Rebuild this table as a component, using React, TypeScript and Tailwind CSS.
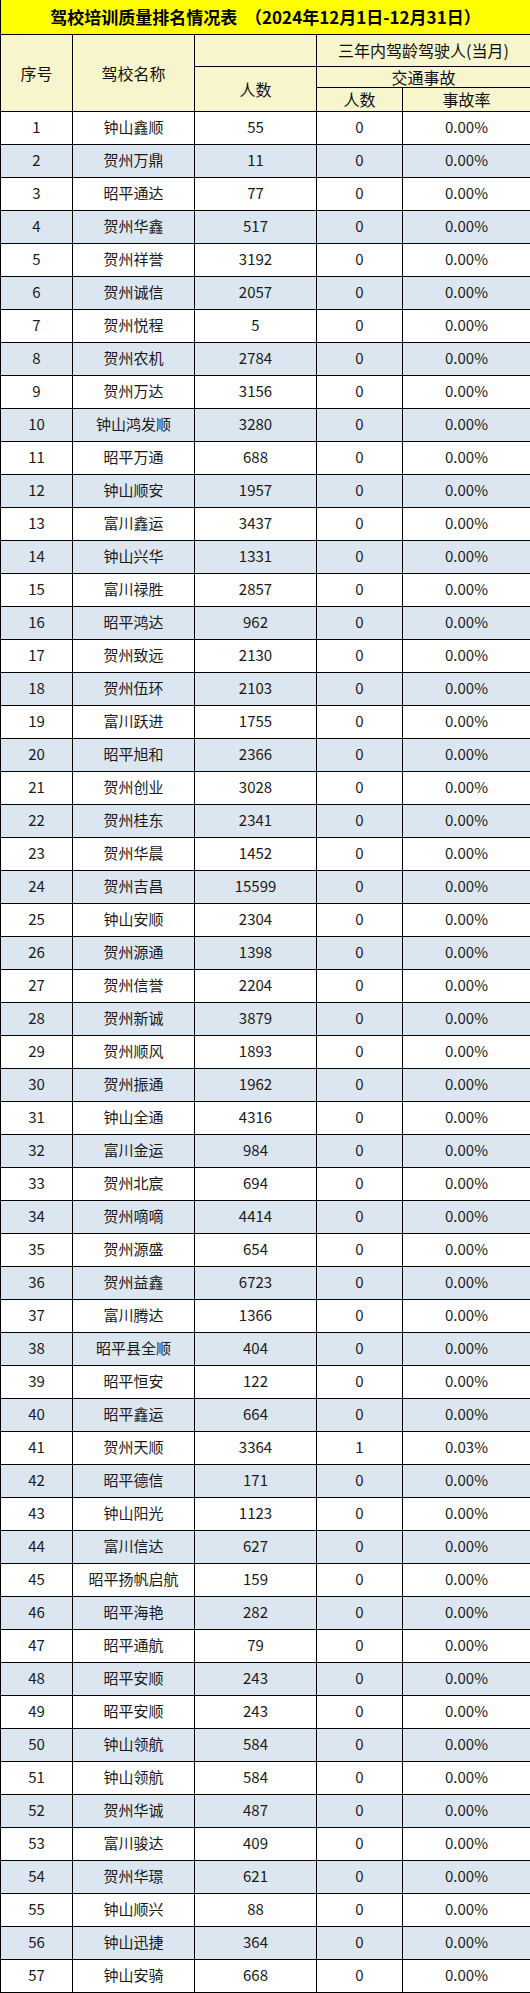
import React from "react";

const rows: [string, number, number, string][] = [
  ["钟山鑫顺", 55, 0, "0.00%"],
  ["贺州万鼎", 11, 0, "0.00%"],
  ["昭平通达", 77, 0, "0.00%"],
  ["贺州华鑫", 517, 0, "0.00%"],
  ["贺州祥誉", 3192, 0, "0.00%"],
  ["贺州诚信", 2057, 0, "0.00%"],
  ["贺州悦程", 5, 0, "0.00%"],
  ["贺州农机", 2784, 0, "0.00%"],
  ["贺州万达", 3156, 0, "0.00%"],
  ["钟山鸿发顺", 3280, 0, "0.00%"],
  ["昭平万通", 688, 0, "0.00%"],
  ["钟山顺安", 1957, 0, "0.00%"],
  ["富川鑫运", 3437, 0, "0.00%"],
  ["钟山兴华", 1331, 0, "0.00%"],
  ["富川禄胜", 2857, 0, "0.00%"],
  ["昭平鸿达", 962, 0, "0.00%"],
  ["贺州致远", 2130, 0, "0.00%"],
  ["贺州伍环", 2103, 0, "0.00%"],
  ["富川跃进", 1755, 0, "0.00%"],
  ["昭平旭和", 2366, 0, "0.00%"],
  ["贺州创业", 3028, 0, "0.00%"],
  ["贺州桂东", 2341, 0, "0.00%"],
  ["贺州华晨", 1452, 0, "0.00%"],
  ["贺州吉昌", 15599, 0, "0.00%"],
  ["钟山安顺", 2304, 0, "0.00%"],
  ["贺州源通", 1398, 0, "0.00%"],
  ["贺州信誉", 2204, 0, "0.00%"],
  ["贺州新诚", 3879, 0, "0.00%"],
  ["贺州顺风", 1893, 0, "0.00%"],
  ["贺州振通", 1962, 0, "0.00%"],
  ["钟山全通", 4316, 0, "0.00%"],
  ["富川金运", 984, 0, "0.00%"],
  ["贺州北宸", 694, 0, "0.00%"],
  ["贺州嘀嘀", 4414, 0, "0.00%"],
  ["贺州源盛", 654, 0, "0.00%"],
  ["贺州益鑫", 6723, 0, "0.00%"],
  ["富川腾达", 1366, 0, "0.00%"],
  ["昭平县全顺", 404, 0, "0.00%"],
  ["昭平恒安", 122, 0, "0.00%"],
  ["昭平鑫运", 664, 0, "0.00%"],
  ["贺州天顺", 3364, 1, "0.03%"],
  ["昭平德信", 171, 0, "0.00%"],
  ["钟山阳光", 1123, 0, "0.00%"],
  ["富川信达", 627, 0, "0.00%"],
  ["昭平扬帆启航", 159, 0, "0.00%"],
  ["昭平海艳", 282, 0, "0.00%"],
  ["昭平通航", 79, 0, "0.00%"],
  ["昭平安顺", 243, 0, "0.00%"],
  ["昭平安顺", 243, 0, "0.00%"],
  ["钟山领航", 584, 0, "0.00%"],
  ["钟山领航", 584, 0, "0.00%"],
  ["贺州华诚", 487, 0, "0.00%"],
  ["富川骏达", 409, 0, "0.00%"],
  ["贺州华璟", 621, 0, "0.00%"],
  ["钟山顺兴", 88, 0, "0.00%"],
  ["钟山迅捷", 364, 0, "0.00%"],
  ["钟山安骑", 668, 0, "0.00%"],
];

const hd = "border border-black bg-[#f6f5cb] text-center align-middle p-0 text-[16px] font-normal text-[#111]";
const td = "border border-black text-center align-middle p-0";

export default function App() {
  return (
    <div className="w-[530px] bg-white" style={{ fontFamily: '"Noto Sans CJK SC", "Noto Sans", sans-serif' }}>
      <table className="w-[530px] border-collapse table-fixed">
        <colgroup>
          <col className="w-[72px]" />
          <col className="w-[122px]" />
          <col className="w-[122px]" />
          <col className="w-[86px]" />
          <col className="w-[128px]" />
        </colgroup>
        <thead>
          <tr className="h-[34px]">
            <th colSpan={5} className="border border-black border-t-0 bg-[#ffff00] text-center align-middle p-0 text-[17px] font-bold text-black leading-none">
              驾校培训质量排名情况表&nbsp;&nbsp;（2024年12月1日-12月31日）
            </th>
          </tr>
          <tr className="h-[32px]">
            <th rowSpan={3} className={hd}>序号</th>
            <th rowSpan={3} className={hd}>驾校名称</th>
            <th className={hd}></th>
            <th colSpan={2} className={hd}>三年内驾龄驾驶人(当月)</th>
          </tr>
          <tr className="h-[21px]">
            <th rowSpan={2} className={hd}>人数</th>
            <th colSpan={2} className={`${hd} leading-none`}>交通事故</th>
          </tr>
          <tr className="h-[24px]">
            <th className={`${hd} leading-none`}>人数</th>
            <th className={`${hd} leading-none`}>事故率</th>
          </tr>
        </thead>
        <tbody className="text-[15px] text-[#1a1a1a]">
          {rows.map((r, i) => (
            <tr key={i} className={`h-[33px] ${i % 2 === 1 ? "bg-[#dce6f1]" : "bg-white"}`}>
              <td className={td}>{i + 1}</td>
              <td className={td}>{r[0]}</td>
              <td className={td}>{r[1]}</td>
              <td className={td}>{r[2]}</td>
              <td className={td}>{r[3]}</td>
            </tr>
          ))}
        </tbody>
      </table>
    </div>
  );
}
